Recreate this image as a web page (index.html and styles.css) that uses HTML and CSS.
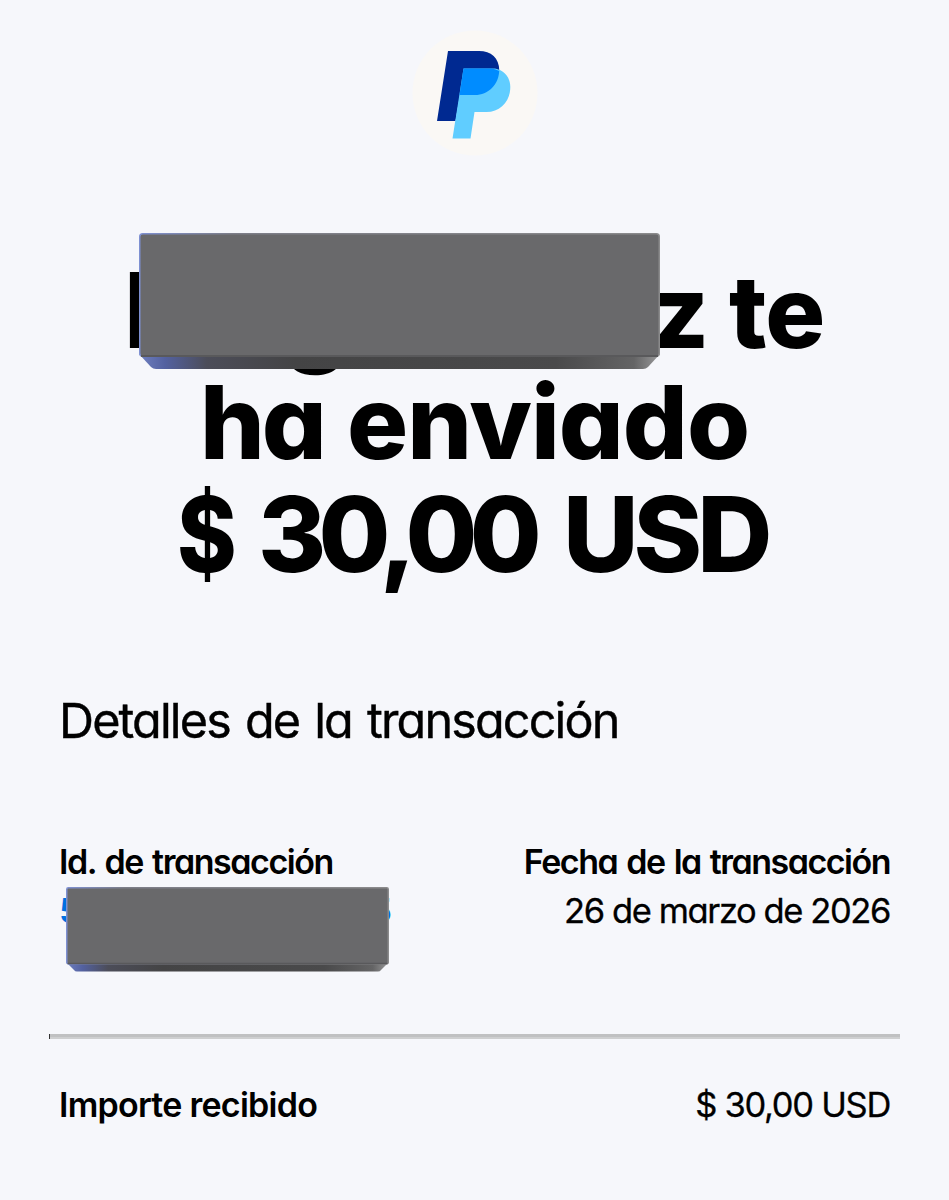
FILE: index.html
```html
<!DOCTYPE html>
<html lang="es">
<head>
<meta charset="utf-8">
<title>Detalles de la transacción</title>
<link rel="stylesheet" href="styles.css">
</head>
<body>
<main class="page">
  <header class="brand">
    <svg class="logo" viewBox="0 0 126 126" role="img" aria-label="PayPal">
      <circle cx="63" cy="63" r="62.500" fill="#faf8f5"/>
      <path fill="#002991" d="M36 21H67C79 21 87.300 28 87.300 40.500C87 55 76 65 63 65H48L43.500 91H25Z"/>
      <path fill="#60cdff" d="M51.500 38.500H83C92 40 98.300 47 98.300 57C98.300 71.500 88 82 74.500 82H62.500L58.500 108.500H40.500Z"/>
      <path fill="#008cff" d="M51.500 38.500H79Q83 38.500 87.200 41C86.500 55 76 65 63 65H47.500Z"/>
    </svg>
  </header>
  <h1 class="title">
    <span class="line line-name"><span class="initial">I</span><span class="descender">g</span><span class="ending">z</span><span class="te">te</span>
      <svg class="block block-name" viewBox="0 0 521 136" preserveAspectRatio="none" aria-hidden="true">
        <defs>
          <linearGradient id="bevel"><stop offset="0" stop-color="#6f80c0"/><stop offset=".05" stop-color="#5361a0"/><stop offset=".13" stop-color="#4c4d59"/><stop offset=".3" stop-color="#444445"/><stop offset=".8" stop-color="#4a4a4b"/><stop offset=".95" stop-color="#646465"/><stop offset="1" stop-color="#9a9a9b"/></linearGradient>
          <linearGradient id="edge"><stop offset="0" stop-color="#7e90d2"/><stop offset=".18" stop-color="#7d7e88"/><stop offset="1" stop-color="#8b8b8c"/></linearGradient>
        </defs>
        <path fill="url(#bevel)" d="M0 121H521L509 134Q507 136 504 136H17Q14 136 12 134Z"/>
        <rect x=".75" y=".75" width="519.500" height="122.500" rx="3" fill="#69696b" stroke="url(#edge)" stroke-width="1.500"/>
        <path d="M2 123H519" stroke="#59595b" stroke-width="2"/>
      </svg>
    </span>
    <span class="line line-sent"><span class="ha">ha</span><span class="enviado">enviado</span></span>
    <span class="line line-sum"><span class="sign">$</span><span class="amount">30,00</span><span class="usd">USD</span></span>
  </h1>
  <h2 class="subtitle">Detalles de la transacción</h2>
  <section class="details">
    <div class="cell">
      <strong class="label label-id">Id. de transacción</strong>
      <span class="value ident"><span>5</span><span>5</span>
        <svg class="block block-id" viewBox="0 0 323 85" preserveAspectRatio="none" aria-hidden="true">
          <path fill="url(#bevel)" d="M0 75H323L315 83Q314 84.500 312 84.500H11Q9 84.500 8 83Z"/>
          <rect x=".75" y=".75" width="321.500" height="76" rx="1.500" fill="#69696b" stroke="url(#edge)" stroke-width="1.500"/>
          <path d="M1.500 76.500H321.500" stroke="#59595b" stroke-width="1.500"/>
        </svg>
      </span>
    </div>
    <div class="cell cell-end">
      <strong class="label label-date">Fecha de la transacción</strong>
      <span class="value date">26 de marzo de 2026</span>
    </div>
  </section>
  <div class="rule"></div>
  <section class="received">
    <strong class="label label-received">Importe recibido</strong>
    <span class="value total">$ 30,00 USD</span>
  </section>
</main>
</body>
</html>
```
FILE: styles.css
```css
* { box-sizing: border-box; }
body { margin: 0; background: #f6f7fb; color: #000; font-family: Inter, "Liberation Sans", sans-serif; font-feature-settings: "cv11" 1; }
.page { display: flex; flex-direction: column; width: 949px; height: 1200px; overflow: hidden; padding: 30px 59px 0; }
.brand { display: flex; justify-content: center; height: 126px; }
.logo { width: 126px; height: 126px; }
.title { margin: 98px 0 0; font-size: 104px; line-height: 112px; font-weight: 800; }
.line { display: flex; height: 112px; white-space: nowrap; }
.line-name { position: relative; padding-left: 65px; }
.initial { width: 159px; }
.descender { width: 368px; padding-top: 5px; }
.ending { width: 78px; }
.ending, .te { font-size: 100px; padding-top: 2px; letter-spacing: -1px; }
.line-sent { padding-left: 141px; font-size: 102px; }
.ha { width: 147px; letter-spacing: -3px; }
.enviado { letter-spacing: -1px; }
.line-sum { padding-left: 118px; }
.sign { width: 81px; transform: scaleX(.87); transform-origin: left; }
.amount { width: 305px; letter-spacing: -7.700px; }
.usd { letter-spacing: -5px; }
.block { position: absolute; display: block; }
.block-name { left: 80px; top: -21px; width: 521px; height: 136px; }
.subtitle { margin: 99px 0 0 0; font-size: 48.500px; line-height: 64px; font-weight: 400; letter-spacing: -1.850px; word-spacing: 3.200px; white-space: nowrap; -webkit-text-stroke: .4px #000; }
.details { display: flex; justify-content: space-between; margin-top: 85px; height: 150px; }
.cell { display: flex; flex-direction: column; }
.cell-end { align-items: flex-end; }
.label { font-size: 34px; line-height: 48px; font-weight: 600; white-space: nowrap; }
.label-id { letter-spacing: -1.450px; word-spacing: 2px; }
.label-date { letter-spacing: -1.500px; word-spacing: 2px; }
.label-received { letter-spacing: -.740px; }
.value { font-size: 34.500px; line-height: 50px; white-space: nowrap; }
.date { letter-spacing: -1.400px; -webkit-text-stroke: .3px #000; }
.total { line-height: 48px; letter-spacing: -1.300px; -webkit-text-stroke: .3px #000; }
.ident { position: relative; display: flex; justify-content: space-between; width: 333px; color: #0070e0; font-weight: 600; }
.block-id { left: 7px; top: 1px; width: 323px; height: 85px; }
.rule { flex: none; width: 851px; height: 5px; margin: 46px 0 0 -10px; background: linear-gradient(#c0c1c2 50%, #cecfd0 50%); border-left: 1px solid #333; }
.received { display: flex; justify-content: space-between; margin-top: 42px; }
```
